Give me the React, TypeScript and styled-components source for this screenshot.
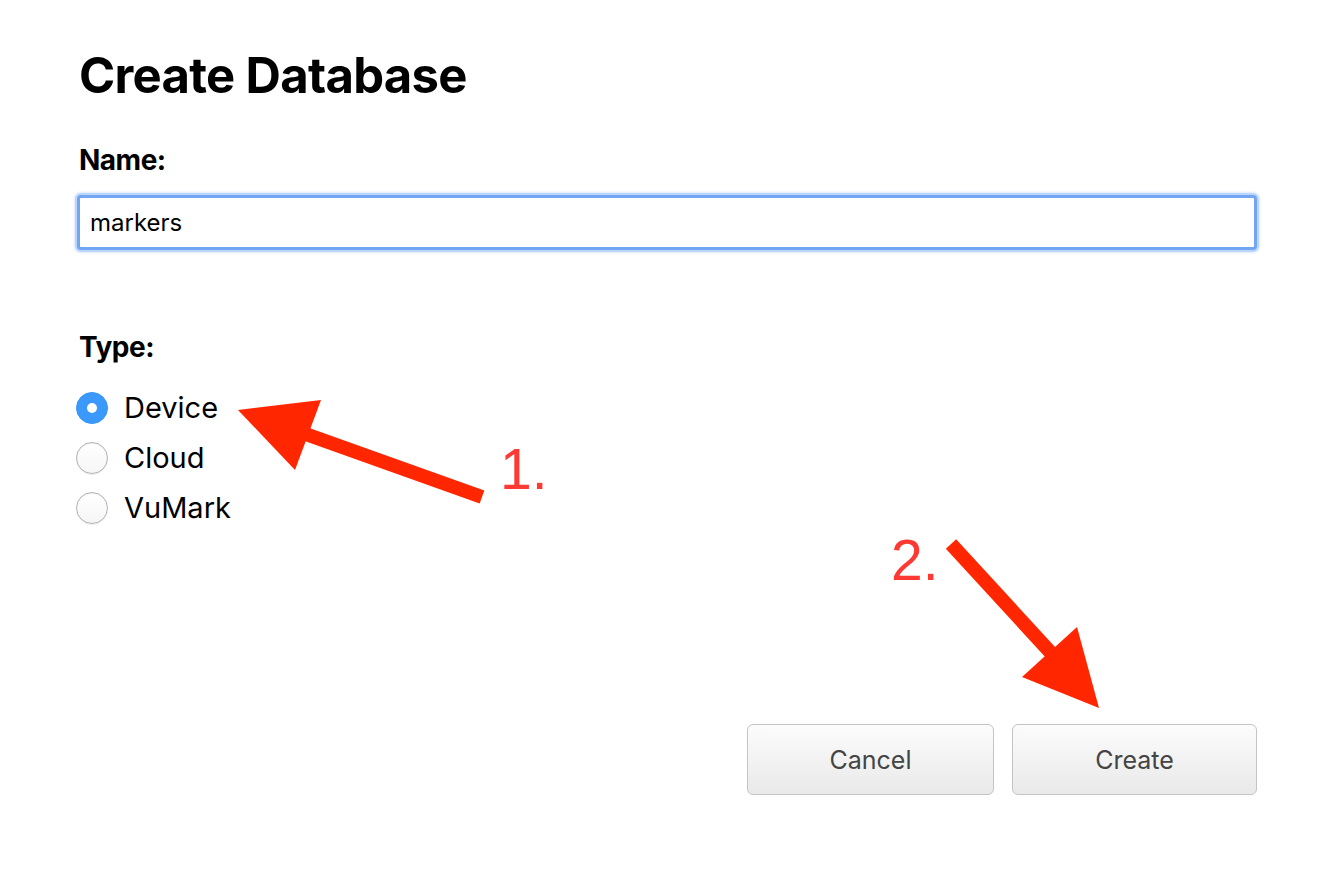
import React from "react";
import styled, { createGlobalStyle } from "styled-components";

const Global = createGlobalStyle`
  html, body { margin: 0; padding: 0; background: #ffffff; }
  body { font-family: Inter, "Noto Sans", sans-serif; color: #000; }
`;

const Page = styled.div`
  position: relative;
  width: 1334px;
  height: 872px;
  box-sizing: border-box;
  padding: 48px 77px 0 79px;
  display: flex;
  flex-direction: column;
`;

const Title = styled.h1`
  margin: 0;
  font-size: 49px;
  font-weight: 700;
  letter-spacing: -0.7px;
  line-height: 56px;
`;

const Label = styled.div<{ $top: number }>`
  margin-top: ${(p) => p.$top}px;
  font-size: 28px;
  font-weight: 700;
  letter-spacing: -0.5px;
  line-height: 34px;
`;

const TextInput = styled.input`
  margin-top: 18px;
  margin-left: -2px;
  width: calc(100% + 2px);
  height: 55px;
  box-sizing: border-box;
  border: 3px solid #72a6f2;
  border-radius: 4px;
  box-shadow: 0 0 0 2px #bcd6fb, 0 0 2px 3px rgba(188, 214, 251, 0.5);
  padding: 0 10px;
  font-family: Inter, "Noto Sans", sans-serif;
  font-size: 24px;
  color: #000;
  outline: none;
  background: #fff;
`;

const RadioList = styled.div`
  margin-top: 28px;
  display: flex;
  flex-direction: column;
  gap: 18px;
  margin-left: -3px;
`;

const RadioRow = styled.label`
  display: flex;
  align-items: center;
  gap: 16px;
  height: 32px;
  font-size: 29px;
  line-height: 32px;
`;

const Circle = styled.span<{ $on?: boolean }>`
  width: 32px;
  height: 32px;
  box-sizing: border-box;
  border-radius: 50%;
  display: flex;
  align-items: center;
  justify-content: center;
  ${(p) =>
    p.$on
      ? `background: #3b99fc; border: 1px solid #3a94f5;`
      : `background: linear-gradient(#ffffff, #f6f6f6); border: 1px solid #b3b3b3; box-shadow: inset 0 1px 1px rgba(0,0,0,0.06), 0 1px 1px rgba(0,0,0,0.08);`}
  &::after {
    content: "";
    display: ${(p) => (p.$on ? "block" : "none")};
    width: 10px;
    height: 10px;
    border-radius: 50%;
    background: #fff;
  }
`;

const Footer = styled.div`
  margin-top: auto;
  margin-bottom: 77px;
  display: flex;
  justify-content: flex-end;
  gap: 18px;
`;

const Button = styled.button<{ $w: number }>`
  width: ${(p) => p.$w}px;
  height: 71px;
  border: 1px solid #c4c4c4;
  border-radius: 6px;
  background: linear-gradient(#fcfcfc, #e9e9e9);
  font-family: Inter, "Noto Sans", sans-serif;
  font-size: 25px;
  color: #444;
  cursor: pointer;
`;

const Overlay = styled.svg`
  position: absolute;
  left: 0;
  top: 0;
  pointer-events: none;
`;

const Step = styled.text`
  font-family: "Liberation Sans", Arial, sans-serif;
  font-size: 57px;
  fill: #fc3a33;
`;

export default function App() {
  return (
    <>
      <Global />
      <Page>
        <Title>Create Database</Title>
        <Label $top={39}>Name:</Label>
        <TextInput defaultValue="markers" />
        <Label $top={80}>Type:</Label>
        <RadioList>
          <RadioRow>
            <Circle $on />
            Device
          </RadioRow>
          <RadioRow>
            <Circle />
            Cloud
          </RadioRow>
          <RadioRow>
            <Circle />
            VuMark
          </RadioRow>
        </RadioList>
        <Footer>
          <Button $w={247}>Cancel</Button>
          <Button $w={245}>Create</Button>
        </Footer>
        <Overlay width={1334} height={872} viewBox="0 0 1334 872">
          <line x1="482" y1="497" x2="300" y2="432" stroke="#ff2600" strokeWidth="14" />
          <polygon points="238,410 321,400 295,470" fill="#ff2600" />
          <Step x="500" y="489">1.</Step>
          <line x1="951" y1="544" x2="1052" y2="654" stroke="#ff2600" strokeWidth="14" />
          <polygon points="1077,627 1022,677 1099,708" fill="#ff2600" />
          <Step x="891" y="580">2.</Step>
        </Overlay>
      </Page>
    </>
  );
}
